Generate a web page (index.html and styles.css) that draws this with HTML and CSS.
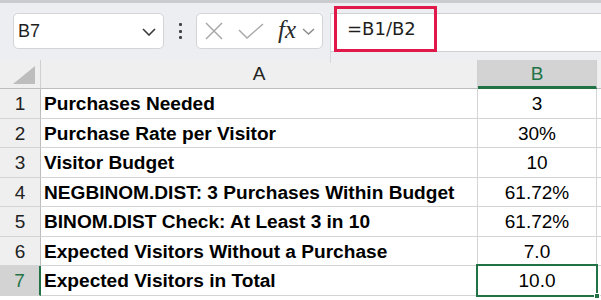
FILE: index.html
```html
<!DOCTYPE html>
<html>
<head>
<meta charset="utf-8">
<link rel="stylesheet" href="styles.css">
</head>
<body>
<div class="toolbar">
  <div class="namebox">
    <span class="name">B7</span>
    <svg class="chev" width="14" height="8" viewBox="0 0 14 8"><path d="M1 1 L7 7 L13 1" fill="none" stroke="#3a3a3a" stroke-width="1.6"/></svg>
  </div>
  <div class="dots"><i></i><i></i><i></i></div>
  <div class="fxbox">
    <svg class="ico" width="18" height="18" viewBox="0 0 18 18"><path d="M1 1 L17 17 M17 1 L1 17" stroke="#a8a8a8" stroke-width="1.5" fill="none"/></svg>
    <svg class="ico" width="26" height="16" viewBox="0 0 26 16"><path d="M1 7 L9 15 L25 1" stroke="#a8a8a8" stroke-width="1.5" fill="none"/></svg>
    <span class="fx">fx</span>
    <svg class="ico small" width="13" height="7" viewBox="0 0 13 7"><path d="M1 1 L6.5 6 L12 1" fill="none" stroke="#8a8a8a" stroke-width="1.4"/></svg>
  </div>
  <div class="formula">
    <div class="hl">=B1/B2</div>
  </div>
</div>
<div class="grid">
  <div class="corner"><svg width="22" height="18" viewBox="0 0 22 18"><path d="M22 0 L22 18 L0 18 Z" fill="#bdbdbd"/></svg></div>
  <div class="ch">A</div>
  <div class="ch sel">B</div>
  <div class="ch rest"></div>

  <div class="rh">1</div><div class="c a">Purchases Needed</div><div class="c b">3</div><div class="c rest"></div>
  <div class="rh">2</div><div class="c a">Purchase Rate per Visitor</div><div class="c b">30%</div><div class="c rest"></div>
  <div class="rh">3</div><div class="c a">Visitor Budget</div><div class="c b">10</div><div class="c rest"></div>
  <div class="rh">4</div><div class="c a">NEGBINOM.DIST: 3 Purchases Within Budget</div><div class="c b">61.72%</div><div class="c rest"></div>
  <div class="rh">5</div><div class="c a">BINOM.DIST Check: At Least 3 in 10</div><div class="c b">61.72%</div><div class="c rest"></div>
  <div class="rh">6</div><div class="c a">Expected Visitors Without a Purchase</div><div class="c b">7.0</div><div class="c rest"></div>
  <div class="rh sel">7</div><div class="c a">Expected Visitors in Total</div><div class="c b active">10.0<span class="handle"></span></div><div class="c rest"></div>
</div>
</body>
</html>
```

FILE: styles.css
```css
* { box-sizing: border-box; }
html, body { margin: 0; padding: 0; }
body {
  width: 601px;
  height: 300px;
  overflow: hidden;
  background: #ffffff;
  font-family: "Liberation Sans", Arial, sans-serif;
  color: #000;
}
.toolbar {
  height: 60px;
  background: #eceef1;
  border-top: 3px solid #c9cbce;
  display: flex;
  align-items: flex-start;
  padding: 10px 0 0 13px;
}
.namebox {
  width: 151px;
  height: 36px;
  background: #fff;
  border: 1px solid #d2d4d7;
  border-radius: 5px;
  display: flex;
  align-items: center;
  justify-content: space-between;
  padding: 0 7px 0 4px;
}
.name { font-size: 18px; color: #1e1e1e; }
.chev { margin-top: 2px; }
.dots {
  width: 32px;
  height: 36px;
  display: flex;
  flex-direction: column;
  align-items: center;
  justify-content: center;
  gap: 3.5px;
}
.dots i {
  display: block;
  width: 3px;
  height: 3px;
  border-radius: 1px;
  background: #444;
}
.fxbox {
  width: 127px;
  height: 36px;
  background: #fff;
  border: 1px solid #d2d4d7;
  border-radius: 5px;
  display: flex;
  align-items: center;
  padding-left: 8px;
}
.fxbox .ico { flex: none; }
.fxbox .ico:nth-child(2) { margin-left: 15px; }
.fx {
  font-family: "Liberation Serif", "DejaVu Serif", serif;
  font-style: italic;
  font-size: 25px;
  color: #2a2a2a;
  margin-left: 14px;
  line-height: 1;
  margin-bottom: 3px;
}
.fxbox .small { margin-left: 6px; }
.formula {
  flex: 1;
  height: 50px;
  margin-left: 7px;
  border-left: 1px solid #d8dadd;
  position: relative;
}
.formula::before {
  content: "";
  position: absolute;
  left: 0; right: 0;
  top: 0; height: 37px;
  background: #fff;
  border-top: 1px solid #cfd1d4;
  border-bottom: 1px solid #cfd1d4;
}
.hl {
  position: absolute;
  left: 3px;
  top: -7px;
  width: 103px;
  height: 46px;
  border: 3px solid #e0194a;
  font-family: "DejaVu Sans", sans-serif;
  font-size: 18px;
  color: #1e1e1e;
  padding-left: 10px;
  line-height: 40px;
}
.grid {
  display: grid;
  grid-template-columns: 41px 437px 119px 1fr;
  grid-template-rows: 29px 30px 29px 30px 29px 30px 29px 30px;
}
.corner, .ch {
  background: #efefef;
  border-right: 1px solid #d0d0d0;
  border-bottom: 1px solid #bdbdbd;
}
.corner {
  display: flex;
  align-items: flex-end;
  justify-content: flex-end;
  padding: 0 5px 4px 0;
}
.ch {
  display: flex;
  align-items: center;
  justify-content: center;
  font-size: 19px;
  color: #222;
}
.ch.sel {
  background: #d3d3d3;
  color: #217346;
  border-bottom: 3px solid #217346;
  padding-top: 2px;
}
.ch.rest { border-right: none; }
.rh {
  background: #efefef;
  border-right: 1px solid #bdbdbd;
  border-bottom: 1px solid #d4d4d4;
  display: flex;
  align-items: center;
  justify-content: center;
  font-size: 19px;
  color: #222;
  padding-top: 1px;
}
.rh.sel {
  background: #d3d3d3;
  color: #217346;
  border-right: 2px solid #217346;
}
.c {
  border-right: 1px solid #d4d4d4;
  border-bottom: 1px solid #d4d4d4;
  display: flex;
  align-items: center;
  font-size: 19px;
  white-space: nowrap;
  padding-top: 1px;
}
.c.a {
  font-weight: bold;
  font-size: 19.1px;
  padding-left: 3px;
}
.c.b { justify-content: center; }
.c.rest { border-right: none; }
.c.active { position: relative; }
.c.active::after {
  content: "";
  position: absolute;
  left: -2px; top: -2px; right: -2px; bottom: -2px;
  border: 2px solid #217346;
}
.handle {
  position: absolute;
  right: -4px;
  bottom: -4px;
  width: 6px;
  height: 6px;
  background: #217346;
  border: 1px solid #fff;
  z-index: 2;
}
```
